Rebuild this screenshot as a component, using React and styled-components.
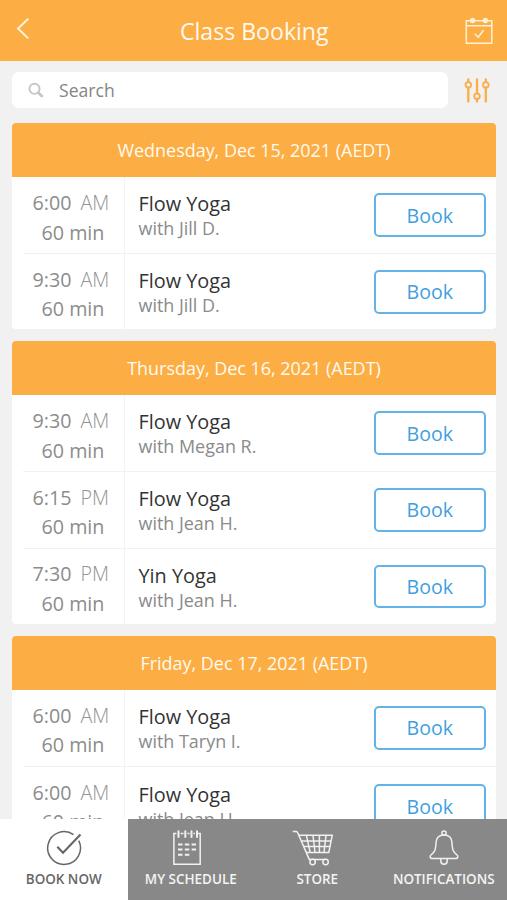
import styled, { createGlobalStyle } from "styled-components";

const days = [
  {
    date: "Wednesday, Dec 15, 2021 (AEDT)",
    classes: [
      { time: "6:00", period: "AM", name: "Flow Yoga", teacher: "Jill D." },
      { time: "9:30", period: "AM", name: "Flow Yoga", teacher: "Jill D." },
    ],
  },
  {
    date: "Thursday, Dec 16, 2021 (AEDT)",
    classes: [
      { time: "9:30", period: "AM", name: "Flow Yoga", teacher: "Megan R." },
      { time: "6:15", period: "PM", name: "Flow Yoga", teacher: "Jean H." },
      { time: "7:30", period: "PM", name: "Yin Yoga", teacher: "Jean H." },
    ],
  },
  {
    date: "Friday, Dec 17, 2021 (AEDT)",
    classes: [
      { time: "6:00", period: "AM", name: "Flow Yoga", teacher: "Taryn I." },
      { time: "6:00", period: "AM", name: "Flow Yoga", teacher: "Jean H.", drop: 1.5 },
    ],
  },
];

const BackIcon = () => (
  <svg width="14" height="22" viewBox="0 0 14 22" fill="none" stroke="#fff3dd" strokeWidth="1.9">
    <path d="M12.3 1.8 L2 11.5 L12.3 21.4" />
  </svg>
);

const CalendarIcon = () => (
  <svg width="28" height="28" viewBox="0 0 28 28" fill="none" stroke="#fff0d4" strokeWidth="1.5">
    <path d="M5.5 3.7 H1.3 V26.2 H26.8 V3.7 H22.5 M9.5 3.7 H18.5 M1.3 8.7 H26.8" />
    <circle cx="7.6" cy="3.5" r="1.9" fill="#fff0d4" />
    <circle cx="20.4" cy="3.5" r="1.9" fill="#fff0d4" />
    <path d="M9.8 16.7 L13.2 20.3 L18.6 13" />
  </svg>
);

const SearchIcon = () => (
  <svg width="16" height="16" viewBox="0 0 16 16" fill="none" stroke="#c6c6c6">
    <circle cx="6.5" cy="6.8" r="5.1" strokeWidth="1.9" />
    <path d="M10.4 10.8 L13.8 14" strokeWidth="2.9" strokeLinecap="round" />
  </svg>
);

const FilterIcon = () => (
  <svg width="26" height="26" viewBox="0 0 26 26" fill="none" stroke="#f9ae48" strokeLinecap="round">
    <path d="M4.3 2.5 V4.4 M4.3 10.4 V24.6 M13 2.5 V15.8 M13 21.8 V24.6 M21.8 2.5 V4.4 M21.8 10.4 V24.6" strokeWidth="2.3" />
    <g strokeWidth="1.8">
      <circle cx="4.3" cy="7.9" r="2.8" />
      <circle cx="13" cy="19.3" r="2.8" />
      <circle cx="21.8" cy="7.9" r="2.8" />
    </g>
  </svg>
);

const BookIcon = () => (
  <svg width="36" height="36" viewBox="0 0 36 36" fill="none" stroke="#666" strokeWidth="1.5">
    <path d="M27.5 4.6 A16.4 16.4 0 1 0 32.7 10.6" />
    <path d="M11.3 16.7 L17 22.8 L34.5 4.6" strokeWidth="2.1" />
  </svg>
);

const ScheduleIcon = () => (
  <svg width="36" height="36" viewBox="0 0 36 36" fill="none" stroke="#f1f1f1" strokeWidth="1.5">
    <path d="M7.4 3.6 H4.9 V34.2 H31.2 V3.6 H28.7 M11.6 3.6 H14.5 M18.5 3.6 H20.5 M24.5 3.6 H26" />
    <path d="M9.5 1.2 V7 M16.3 1.2 V7 M22.5 1.2 V7 M28 1.2 V7" strokeWidth="2" strokeLinecap="round" />
    <path d="M9 14.5 H13.5 M15.8 14.5 H20.3 M22.6 14.5 H27.1 M9 19.5 H13.5 M15.8 19.5 H20.3 M22.6 19.5 H27.1 M9 24.7 H13.5 M15.8 24.7 H20.3" strokeWidth="1.9" />
  </svg>
);

const CartIcon = () => (
  <svg width="42" height="36" viewBox="0 0 42 36" fill="none" stroke="#f1f1f1" strokeWidth="1.5">
    <path d="M.8 1.4 H4.2 Q5.2 1.4 5.8 3 L17.3 29.4 H33.5 M7 5.3 H40.2 L36.8 22.5 H14.3" />
    <path d="M9.6 11 H39 M12 16.6 H37.9" />
    <path d="M14.4 5.3 L18.2 22.5 M21 5.3 L23 22.5 M27.4 5.3 V22.5 M34 5.3 L32 22.5" />
    <circle cx="20.6" cy="32" r="2.7" fill="#888" />
    <circle cx="33.6" cy="32" r="2.7" fill="#888" />
  </svg>
);

const BellIcon = () => (
  <svg width="32" height="36" viewBox="0 0 32 36" fill="none" stroke="#f1f1f1" strokeWidth="1.5">
    <circle cx="16" cy="3" r="2.1" />
    <path d="M16 5 C10.5 5 8.2 8.5 8 13 C7.8 19.5 7 21.8 3 25 C1.6 26.2 2 28.5 4 28.5 H28 C30 28.5 30.4 26.2 29 25 C25 21.8 24.2 19.5 24 13 C23.8 8.5 21.5 5 16 5 Z" />
    <path d="M12.8 28.8 V31 A3.2 3.2 0 0 0 19.2 31 V28.8" />
  </svg>
);

const tabs = [
  { label: "BOOK NOW", icon: <BookIcon />, active: true },
  { label: "MY SCHEDULE", icon: <ScheduleIcon />, shift: -4 },
  { label: "STORE", icon: <CartIcon />, shift: -4 },
  { label: "NOTIFICATIONS", icon: <BellIcon /> },
];

const App = () => {
  return (
    <Screen>
      <GlobalStyle />
      <TopBar>
        <IconButton aria-label="Back">
          <BackIcon />
        </IconButton>
        <Title>Class Booking</Title>
        <IconButton aria-label="My bookings">
          <CalendarIcon />
        </IconButton>
      </TopBar>

      <SearchRow>
        <SearchBox>
          <SearchIcon />
          <span>Search</span>
        </SearchBox>
        <IconButton aria-label="Filter">
          <FilterIcon />
        </IconButton>
      </SearchRow>

      <Days>
        {days.map(({ date, classes }) => (
          <DayCard key={date}>
            <DayHeader>{date}</DayHeader>
            {classes.map(({ time, period, name, teacher, drop }, i) => (
              <ClassRow key={i} $last={i === classes.length - 1}>
                <TimeCell>
                  <p>
                    {time}
                    <Period>{period}</Period>
                  </p>
                  <p className="length">60 min</p>
                </TimeCell>
                <ClassInfo $drop={drop}>
                  <div>
                    <h3>{name}</h3>
                    <p>with {teacher}</p>
                  </div>
                  <BookButton>Book</BookButton>
                </ClassInfo>
              </ClassRow>
            ))}
          </DayCard>
        ))}
      </Days>

      <TabBar>
        {tabs.map(({ label, icon, active, shift }) => (
          <Tab key={label} $active={active} $shift={shift}>
            {icon}
            <span>{label}</span>
          </Tab>
        ))}
      </TabBar>
    </Screen>
  );
};

export default App;

const GlobalStyle = createGlobalStyle`
  * {
    box-sizing: border-box;
    margin: 0;
    padding: 0;
  }

  body {
    font-family: "Open Sans", sans-serif;
    background: #f1f1f1;
  }
`;

const Screen = styled.div`
  display: flex;
  flex-direction: column;
  width: 507px;
  height: 900px;
  overflow: hidden;
  background: #f1f1f1;
`;

const TopBar = styled.header`
  display: flex;
  flex-shrink: 0;
  align-items: flex-start;
  justify-content: space-between;
  height: 61.4px;
  padding: 17px 14px 0 16px;
  background: #fcae45;
`;

const IconButton = styled.button`
  display: flex;
  border: 0;
  background: none;
`;

const Title = styled.h1`
  padding-left: 13.5px;
  color: #fff9ee;
  font-size: 23.1px;
  font-weight: 400;
  line-height: 29px;
`;

const SearchRow = styled.div`
  display: flex;
  flex-shrink: 0;
  align-items: center;
  gap: 16px;
  padding: 10.5px 12px 15px;
`;

const SearchBox = styled.div`
  display: flex;
  align-items: center;
  gap: 15px;
  width: 436px;
  height: 36.5px;
  padding-left: 16px;
  border-radius: 7px;
  background: #fff;
  color: #858585;
  font-size: 17.6px;
`;

const Days = styled.main`
  display: flex;
  flex: 1;
  flex-direction: column;
  gap: 12px;
  min-height: 0;
  padding: 0 11px 0 12px;
  overflow: hidden;
`;

const DayCard = styled.section`
  flex-shrink: 0;
  border-radius: 4px;
  background: #fff;
  overflow: hidden;
`;

const DayHeader = styled.h2`
  height: 53.9px;
  background: #fcae45;
  color: #fffaf0;
  font-size: 17.95px;
  font-weight: 400;
  line-height: 54px;
  text-align: center;
`;

const ClassRow = styled.div`
  display: grid;
  grid-template-columns: 113px 1fr;
  height: ${({ $last }) => ($last ? "75.6px" : "76.6px")};
  background: ${({ $last }) =>
    $last ? "none" : "linear-gradient(#eff2f3, #eff2f3) 11px 100% / 100% 1px no-repeat"};
`;

const TimeCell = styled.div`
  padding: 10.9px 0 0 20.5px;
  border-right: 1px solid #f1f4f4;
  color: #8c8c8c;
  font-size: 19.7px;
  line-height: 29.4px;
  white-space: nowrap;

  .length {
    padding-left: 9px;
  }
`;

const Period = styled.span`
  margin-left: 9px;
  color: #949494;
  font-weight: 300;
`;

const ClassInfo = styled.div`
  display: flex;
  align-items: flex-start;
  justify-content: space-between;
  padding: ${({ $drop = 0 }) => 15.1 + $drop}px 10.5px 0 13.5px;

  h3 {
    color: #333;
    font-size: 19.85px;
    font-weight: 400;
    line-height: 24px;
  }

  p {
    color: #8a8a8a;
    font-size: 17.95px;
    line-height: 25px;
  }
`;

const BookButton = styled.button`
  width: 111.5px;
  height: 43.6px;
  margin-top: 1px;
  border: 2px solid #63b3ea;
  border-radius: 5px;
  background: #fff;
  color: #419fdf;
  font-family: inherit;
  font-size: 19.6px;
`;

const TabBar = styled.nav`
  display: grid;
  flex-shrink: 0;
  grid-template-columns: 127.5px repeat(3, 126.5px);
  height: 80.6px;
  background: #888;
`;

const Tab = styled.div`
  display: flex;
  flex-direction: column;
  align-items: center;
  gap: 2.5px;
  padding-top: 11px;
  background: ${({ $active }) => ($active ? "#fff" : "#888")};
  color: ${({ $active }) => ($active ? "#666" : "#f4f4f4")};
  font-size: 13.45px;
  font-weight: 600;
  line-height: 20px;
  white-space: nowrap;

  svg {
    margin-left: ${({ $shift = 0 }) => $shift * 2}px;
  }
`;
